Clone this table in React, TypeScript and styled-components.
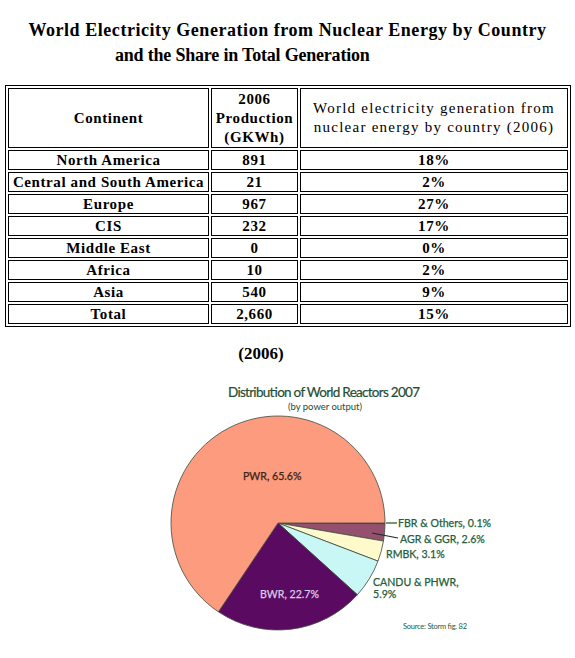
import { FC } from 'react';
import styled, { createGlobalStyle } from 'styled-components';

const GlobalStyle = createGlobalStyle`
  body {
    margin: 0;
    background: #fff;
    font-family: 'Liberation Serif', 'Times New Roman', serif;
    color: #000;
  }
`;

interface Row {
  continent: string;
  production: string;
  share: string;
}

const rows: Row[] = [
  { continent: 'North America', production: '891', share: '18%' },
  { continent: 'Central and South America', production: '21', share: '2%' },
  { continent: 'Europe', production: '967', share: '27%' },
  { continent: 'CIS', production: '232', share: '17%' },
  { continent: 'Middle East', production: '0', share: '0%' },
  { continent: 'Africa', production: '10', share: '2%' },
  { continent: 'Asia', production: '540', share: '9%' },
  { continent: 'Total', production: '2,660', share: '15%' },
];

interface Slice {
  name: string;
  share: number;
  fill: string;
}

// clockwise from 3 o'clock
const slices: Slice[] = [
  { name: 'FBR', share: 0.1, fill: '#5e2a4c' },
  { name: 'AGR', share: 2.6, fill: '#94516f' },
  { name: 'RMBK', share: 3.1, fill: '#fffacb' },
  { name: 'CANDU', share: 5.9, fill: '#c9f7f6' },
  { name: 'BWR', share: 22.7, fill: '#5a0a60' },
  { name: 'PWR', share: 65.6, fill: '#fd9b7f' },
];

const CX = 278;
const CY = 521;
const R = 107;

const point = (deg: number) => {
  const a = (deg * Math.PI) / 180;
  return `${(CX + R * Math.cos(a)).toFixed(2)} ${(CY + R * Math.sin(a)).toFixed(2)}`;
};

const slicePaths = () => {
  let start = 0;
  return slices.map(s => {
    const end = start + (s.share / 100) * 360;
    const large = end - start > 180 ? 1 : 0;
    const d = `M ${CX} ${CY} L ${point(start)} A ${R} ${R} 0 ${large} 1 ${point(end)} Z`;
    start = end;
    return { ...s, d };
  });
};

const ReactorChart: FC = () => (
  <Chart viewBox="0 370 575 288" width={575} height={288}>
    <ChartTitle x={228} y={395} textLength={192}>
      Distribution of World Reactors 2007
    </ChartTitle>
    <ChartSub x={288} y={408} textLength={74}>
      (by power output)
    </ChartSub>
    {slicePaths().map(s => (
      <path key={s.name} d={s.d} fill={s.fill} stroke="#3d4a3c" strokeWidth={0.8} strokeLinejoin="round" />
    ))}
    <line x1={386} y1={521} x2={397} y2={521} stroke="#1f4a34" strokeWidth={1.2} />
    <line x1={372} y1={531} x2={398} y2={536} stroke="#1f2a24" strokeWidth={1.2} />
    <SliceLabel x={243} y={478} $color="#3b2418">PWR, 65.6%</SliceLabel>
    <SliceLabel x={260} y={596} $color="#d9cbe6">BWR, 22.7%</SliceLabel>
    <SliceLabel x={398} y={525} $color="#235e3c">FBR &amp; Others, 0.1%</SliceLabel>
    <SliceLabel x={400} y={541} $color="#235e3c">AGR &amp; GGR, 2.6%</SliceLabel>
    <SliceLabel x={386} y={556} $color="#235e3c">RMBK, 3.1%</SliceLabel>
    <SliceLabel x={373} y={584} $color="#235e3c">CANDU &amp; PHWR,</SliceLabel>
    <SliceLabel x={373} y={596} $color="#235e3c">5.9%</SliceLabel>
    <SourceNote x={403} y={627} textLength={64}>Source: Storm fig. 82</SourceNote>
  </Chart>
);

const App: FC = () => (
  <Page>
    <GlobalStyle />
    <Title>
      <TitleLine $spacing={0.55}>World Electricity Generation from Nuclear Energy by Country</TitleLine>
      <TitleLine $indent={115} $spacing={-0.2}>and the Share in Total Generation</TitleLine>
    </Title>
    <Table>
      <colgroup>
        <col style={{ width: 201 }} />
        <col style={{ width: 87 }} />
        <col />
      </colgroup>
      <thead>
        <tr>
          <HeadCell>Continent</HeadCell>
          <HeadCell>
            2006
            <br />
            Production
            <br />
            (GKWh)
          </HeadCell>
          <HeadCell $light>
            World electricity generation from
            <br />
            nuclear energy by country (2006)
          </HeadCell>
        </tr>
      </thead>
      <tbody>
        {rows.map(r => (
          <tr key={r.continent}>
            <Cell>{r.continent}</Cell>
            <Cell>{r.production}</Cell>
            <Cell>{r.share}</Cell>
          </tr>
        ))}
      </tbody>
    </Table>
    <Caption>(2006)</Caption>
    <ReactorChart />
  </Page>
);

export default App;

const Page = styled.div`
  width: 575px;
  height: 658px;
  overflow: hidden;
`;

const Title = styled.h1`
  margin: 0;
  padding: 18px 0 0;
  height: 67px;
  box-sizing: border-box;
  font-size: 18px;
  font-weight: bold;
  line-height: 25px;
`;

const TitleLine = styled.div<{ $indent?: number; $spacing: number }>`
  text-align: ${p => (p.$indent ? 'left' : 'center')};
  padding-left: ${p => p.$indent ?? 0}px;
  letter-spacing: ${p => p.$spacing}px;
  white-space: nowrap;
`;

const Table = styled.table`
  margin: 18px 0 0 5px;
  width: 566px;
  table-layout: fixed;
  border: 1px solid #000;
  border-spacing: 2px;
  font-size: 15px;
  font-weight: bold;
  letter-spacing: 0.6px;
`;

const HeadCell = styled.td<{ $light?: boolean }>`
  border: 1px solid #000;
  padding: 0;
  text-align: center;
  vertical-align: middle;
  line-height: 19px;
  height: 58px;
  font-weight: ${p => (p.$light ? 'normal' : 'bold')};
  letter-spacing: ${p => (p.$light ? 1.25 : 0.6)}px;
  white-space: nowrap;
`;

const Cell = styled.td`
  border: 1px solid #000;
  padding: 0;
  text-align: center;
  line-height: 18px;
  white-space: nowrap;
`;

const Caption = styled.div`
  margin-top: 17px;
  text-align: center;
  padding-right: 53px;
  font-size: 17px;
  font-weight: bold;
  line-height: 20px;
`;

const Chart = styled.svg`
  display: block;
  margin-top: 8px;
  font-family: Lato, 'Open Sans', sans-serif;
`;

const ChartTitle = styled.text`
  font-size: 13.5px;
  fill: #1e4d36;
  stroke: #1e4d36;
  stroke-width: 0.2px;
`;

const ChartSub = styled.text`
  font-size: 9.5px;
  fill: #1e4d36;
`;

const SliceLabel = styled.text<{ $color: string }>`
  font-size: 10.6px;
  fill: ${p => p.$color};
  stroke: ${p => p.$color};
  stroke-width: 0.25px;
`;

const SourceNote = styled.text`
  font-size: 7.5px;
  fill: #235e3c;
`;
